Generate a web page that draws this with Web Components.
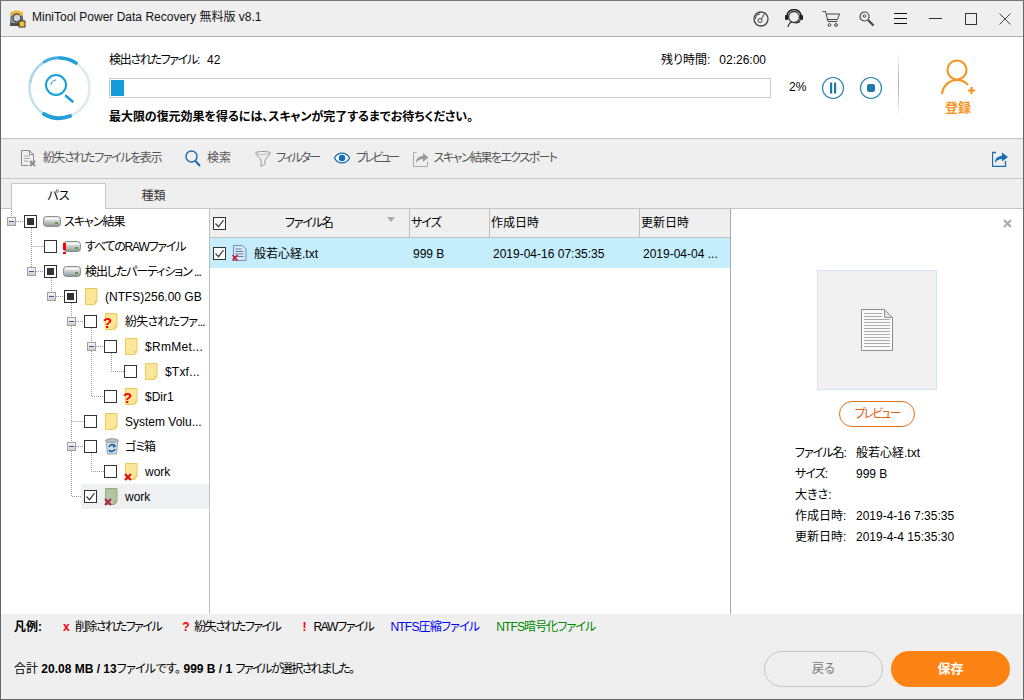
<!DOCTYPE html>
<html lang="ja"><head><meta charset="utf-8"><title>MiniTool Power Data Recovery</title>
<style>
html,body{margin:0;padding:0;background:#fff}
body{font:12px/1.2 "Liberation Sans","Noto Sans CJK JP",sans-serif;color:#000;font-feature-settings:"palt" 1}
</style></head><body>
<app-window>
  <title-bar></title-bar>
  <scan-panel></scan-panel>
  <tool-bar></tool-bar>
  <tab-bar></tab-bar>
  <main-area>
    <file-tree slot="tree"></file-tree>
    <file-table slot="table"></file-table>
    <preview-panel slot="preview"></preview-panel>
  </main-area>
  <status-area></status-area>
</app-window>
<script>
function def(name,html,setup){
  customElements.define(name,class extends HTMLElement{
    connectedCallback(){
      if(this.shadowRoot)return;
      const r=this.attachShadow({mode:'open'});
      r.innerHTML=typeof html==='function'?html(this):html;
      if(setup)setup(this,r);
    }
  });
}
const folder=(fill='#fce69a',line='#eac95a')=>`<svg width="13" height="17" viewBox="0 0 13 17"><path d="M.5.5h11.500v13l-2.500 3H.5z" fill="${fill}" stroke="${line}"/><path d="M10 16v-3h2" fill="none" stroke="${line}"/></svg>`;
const hdd=`<svg width="18" height="11" viewBox="0 0 18 11"><defs><linearGradient id="h" x1="0" y1="0" x2="0" y2="1"><stop offset="0" stop-color="#eee"/><stop offset=".5" stop-color="#c8cccc"/><stop offset="1" stop-color="#8b9090"/></linearGradient></defs><rect x=".5" y=".5" width="17" height="10" rx="3" fill="url(#h)" stroke="#8a8f8f"/><rect x="2" y="2" width="14" height="2" rx="1" fill="#f4f4f4"/><rect x="12" y="6" width="3" height="2" fill="#5aa04a"/></svg>`;
const check=`<svg width="13" height="13" viewBox="0 0 13 13" style="display:block"><path d="M2.500 6.500l3 3.200 5-6.500" fill="none" stroke="#444" stroke-width="1.300"/></svg>`;

def('app-window',`<style>
:host{display:flex;flex-direction:column;box-sizing:border-box;width:1024px;height:700px;border:1px solid #666;border-top-color:#777;overflow:hidden;background:#fff}
</style><slot></slot>`);

def('title-bar',`<style>
:host{display:flex;align-items:center;box-sizing:border-box;height:36px;background:#efefef;border-bottom:1px solid #adadad;flex:none;padding-left:8px;font-size:12px;color:#111}
.t{margin-left:6px;flex:1;white-space:nowrap;position:relative;top:-1px}
svg{display:block}
.i{display:flex;align-items:center;justify-content:center;height:35px}
</style>
<svg width="17" height="19" viewBox="0 0 17 19"><path d="M2 3h11l2 14H1z" fill="#4a4f52"/><path d="M3 4h9l1.500 10H2z" fill="#8c9498"/><circle cx="8" cy="9" r="4" fill="#ccd3d6" stroke="#333"/><path d="M1 6C2 2 8 0 12 3l2-1-.5 5-4-1 1.500-1C8 3 4 4 3 7z" fill="#f3b52c"/><rect x="10" y="12" width="6" height="6" fill="#f3c230" stroke="#333"/></svg>
<span class="t">MiniTool Power Data Recovery 無料版 v8.1</span>
<div class="i" style="width:30px"><svg width="16" height="16" viewBox="0 0 16 16"><circle cx="8" cy="8" r="7" fill="none" stroke="#444" stroke-width="1.300"/><circle cx="7" cy="9.500" r="2" fill="none" stroke="#444"/><path d="M7 3a5 5 0 0 0-4.500 5M12 1.500L8.500 8" fill="none" stroke="#444"/></svg></div>
<div class="i" style="width:36px"><svg width="20" height="20" viewBox="0 0 20 20"><circle cx="10" cy="8" r="5.500" fill="none" stroke="#333" stroke-width="1.300"/><path d="M3 9V7a7 6.500 0 0 1 14 0v2" fill="none" stroke="#222" stroke-width="1.500"/><rect x="1" y="6" width="3" height="5" rx="1" fill="#222"/><rect x="16" y="6" width="3" height="5" rx="1" fill="#222"/><path d="M4 18c.6-3 2-4.500 4-5M16 11c0 2-2 3-5 3" fill="none" stroke="#222" stroke-width="1.200"/></svg></div>
<div class="i" style="width:37px"><svg width="18" height="18" viewBox="0 0 18 18"><path d="M.5 1.500h3l2.500 10h9.500M4.500 4h13l-2 5.500H5.800" fill="none" stroke="#444"/><circle cx="7.500" cy="15" r="1.400" fill="none" stroke="#444"/><circle cx="14" cy="15" r="1.400" fill="none" stroke="#444"/></svg></div>
<div class="i" style="width:35px"><svg width="16" height="16" viewBox="0 0 16 16"><circle cx="5.500" cy="5.500" r="4.500" fill="none" stroke="#444" stroke-width="1.200"/><circle cx="5.500" cy="5" r="1.300" fill="none" stroke="#444"/><path d="M9 9l5.500 5.500" stroke="#444" stroke-width="2.200"/></svg></div>
<div class="i" style="width:33px"><svg width="13" height="11" viewBox="0 0 13 11"><path d="M0 .5h13M0 5.500h13M0 10.500h13" stroke="#111"/></svg></div>
<div class="i" style="width:36px"><svg width="13" height="1"><rect width="13" height="1" fill="#333"/></svg></div>
<div class="i" style="width:35px"><svg width="12" height="12"><rect x=".5" y=".5" width="11" height="11" fill="none" stroke="#333"/></svg></div>
<div class="i" style="width:34px;margin-right:1px"><svg width="12" height="12"><path d="M.5.500l11 11M11.500.500l-11 11" stroke="#444"/></svg></div>`);

def('scan-panel',`<style>
:host{display:flex;box-sizing:border-box;height:102px;flex:none;background:#fff;border-bottom:1px solid #c6c6c6}
.logo{width:108px;flex:none;display:flex;padding:19px 0 0 26px;box-sizing:border-box}
.mid{width:662px;flex:none;display:flex;flex-direction:column;padding-top:15px;box-sizing:border-box}
.top{display:flex;height:26px;padding-top:1px;box-sizing:border-box;justify-content:space-between;padding-right:5px}
.top b{font-weight:400;margin-left:8px}
.bar{box-sizing:border-box;height:20px;border:1px solid #cacaca;padding:1px}
.bar i{display:block;height:100%;width:13px;background:#149cd8}
.msg{font-weight:700;margin-top:12px;white-space:nowrap;letter-spacing:-.05px}
.ctl{display:flex;align-items:center;height:23px;margin-top:39px;flex:none}
.pct{margin-left:18px;width:32px}
svg{display:block}
.div{width:1px;height:66px;margin:15px 0 0 15px;background:linear-gradient(#fff,#aaa 50%,#fff);flex:none}
.reg{flex:1;display:flex;flex-direction:column;align-items:center;padding:21px 6px 0 0;color:#f7941d;font-weight:700;font-size:13px}
.reg span{margin-top:6px;line-height:15px}
</style>
<div class="logo"><svg width="66" height="66" viewBox="0 0 66 66" fill="none">
<circle cx="32.500" cy="32" r="30" stroke="#dde9ee" stroke-width="2.500"/>
<path d="M17 6A30 30 0 0 0 3 27" stroke="#a8d6ea" stroke-width="2.500"/>
<path d="M3 27A30 30 0 0 0 17 58" stroke="#c4e2ee" stroke-width="2.500"/>
<path d="M49 7A30 30 0 0 0 17 6" stroke="#46aede" stroke-width="3" stroke-linecap="round"/>
<path d="M49 7A30 30 0 0 0 33 2" stroke="#22a0da" stroke-width="3.500" stroke-linecap="round"/>
<path d="M17 58A30 30 0 0 0 43 60" stroke="#22a0da" stroke-width="4" stroke-linecap="round"/>
<circle cx="29" cy="29" r="10" stroke="#1a9fd9" stroke-width="2"/><path d="M24 29a5 5 0 0 1 5-5" stroke="#1a9fd9" stroke-width="1"/><path d="M39 40l6.500 5.500" stroke="#1a9fd9" stroke-width="2.600" stroke-linecap="round"/></svg></div>
<div class="mid">
  <div class="top"><span><span style="letter-spacing:-1.3px">検出されたファイル:</span><b>42</b></span><span>残り時間:<b style="margin-left:9px">02:26:00</b></span></div>
  <div class="bar"><i></i></div>
  <div class="msg">最大限の復元効果を得るには、スキャンが完了するまでお待ちください。</div>
</div>
<div class="ctl"><span class="pct">2%</span>
<svg width="24" height="24" viewBox="0 0 24 24"><circle cx="12" cy="12" r="10.500" fill="#fff" stroke="#2786b0" stroke-width="1.200"/><path d="M9 6.500h2.200v11H9zM13 6.500h2.200v11H13z" fill="#1c7ba8"/></svg>
<svg width="24" height="24" viewBox="0 0 24 24" style="margin-left:14px"><circle cx="12" cy="12" r="10.500" fill="#fff" stroke="#2786b0" stroke-width="1.200"/><rect x="8" y="8" width="8" height="8" rx="2" fill="#1c7ba8"/></svg></div>
<div class="div"></div>
<div class="reg"><svg width="34" height="36" viewBox="0 0 34 36"><circle cx="16" cy="12" r="9.500" fill="none" stroke="#f7941d" stroke-width="2"/><path d="M1 36C2 27 9 22 16 22c4 0 8 1.500 11 5" fill="none" stroke="#f7941d" stroke-width="2"/><path d="M27 32.500h7M30.500 29v7" stroke="#f7941d" stroke-width="2.200"/></svg><span>登録</span></div>`);

def('tool-item',t=>`<style>
:host{display:flex;align-items:center;color:#555;white-space:nowrap;margin-left:${t.getAttribute('ml')||0}px}
span{margin-left:${t.getAttribute('gap')||6}px;letter-spacing:${t.getAttribute('ls')||0}px}
::slotted(svg){display:block}
</style><slot></slot><span>${t.getAttribute('label')}</span>`);

def('tool-bar',`<style>
:host{display:flex;align-items:center;box-sizing:border-box;height:40px;flex:none;background:#efefef;border-bottom:1px solid #c6c6c6;padding:0 15px 0 20px}
.sp{flex:1}svg{display:block}
</style>
<tool-item label="紛失されたファイルを表示" ls="-1.4"><svg width="16" height="18" viewBox="0 0 16 18"><path d="M.5.500h8l4 4v8M12.500 4.500h-4v-4M.5.500v15h7" fill="none" stroke="#8a8a8a"/><path d="M3 6h6M3 8.500h6M3 11h4" stroke="#aaa"/><path d="M9 11l5 5M14 11l-5 5" stroke="#8a8a8a" stroke-width="2"/></svg></tool-item>
<tool-item label="検索" ml="24"><svg width="16" height="17" viewBox="0 0 16 17"><circle cx="6.500" cy="6.500" r="5.500" fill="none" stroke="#1b6cb0" stroke-width="1.400"/><path d="M10.500 11l4.500 5" stroke="#1b6cb0" stroke-width="2"/></svg></tool-item>
<tool-item label="フィルター" ml="24" gap="5" ls="-1.9"><svg width="16" height="16" viewBox="0 0 16 16"><path d="M.5 2c0-2 15-2 15 0L10 9v4l-4 2.500V9z" fill="none" stroke="#999"/><path d="M2 2.500c3 1.500 9 1.500 12 0" fill="none" stroke="#bbb"/></svg></tool-item>
<tool-item label="プレビュー" ml="15" ls="-2.6"><svg width="16" height="12" viewBox="0 0 16 12"><path d="M.5 6C4-.5 12-.5 15.500 6 12 12.500 4 12.500.5 6z" fill="#fff" stroke="#1b6cb0" stroke-width="1.300"/><circle cx="8" cy="6" r="3.300" fill="#1b6cb0"/></svg></tool-item>
<tool-item label="スキャン結果をエクスポート" ml="15" gap="5" ls="-1.55"><svg width="16" height="16" viewBox="0 0 16 16"><path d="M3.500 1.500H.5v14h14v-5" fill="none" stroke="#aaa"/><path d="M3 12c0-5 3-7 7-7V2l5.500 4.500L10 11V8c-3 0-5 1-7 4z" fill="#999"/></svg></tool-item>
<div class="sp"></div>
<svg width="16" height="16" viewBox="0 0 16 16"><path d="M4 1.500H.5v14h13V10" fill="none" stroke="#1b6cb0" stroke-width="1.300"/><path d="M3 12c0-5 3-7 7-7V1.500L16 6l-6 4.500V8c-3 0-5 1-7 4z" fill="#1b6cb0"/></svg>`);

def('tab-bar',`<style>
:host{display:flex;box-sizing:border-box;height:30px;flex:none;background:#efefef;border-bottom:1px solid #c6c6c6;padding:4px 0 0 10px;align-items:flex-end}
div{box-sizing:border-box;width:95px;height:26px;display:flex;align-items:center;justify-content:center;margin-bottom:-1px;font-size:12px}
.on{background:#fff;border:1px solid #c6c6c6;border-bottom:0;height:26px}
.off{color:#333}
</style><div class="on">パス</div><div class="off">種類</div>`);

def('main-area',`<style>
:host{display:flex;flex:none;height:405px;background:#fff}
::slotted([slot=tree]){width:209px;box-sizing:border-box;flex:none;border-right:1px solid #c0c0c0}
::slotted([slot=table]){width:521px;box-sizing:border-box;flex:none;border-right:1px solid #aaa}
::slotted([slot=preview]){flex:1}
</style><slot name="tree"></slot><slot name="table"></slot><slot name="preview"></slot>`);

def('tree-row',t=>{
  const l=+t.getAttribute('level')||0, exp=t.hasAttribute('expander');
  const st=t.getAttribute('state')||'';
  const inner=st==='mixed'?'<i></i>':st==='checked'?check:'';
  return `<style>
:host{display:flex;align-items:center;height:25px;box-sizing:border-box;position:relative;white-space:nowrap;padding-left:${6+20*l}px}
.exp{box-sizing:border-box;width:9px;height:9px;flex:none;margin-right:8px;position:relative;background:linear-gradient(#f6f6f6,#cfcfcf);border:1px solid #a0a0a0;${exp?'':'visibility:hidden'}}
.exp:after{content:"";position:absolute;left:1px;right:1px;top:3px;height:1px;background:#3a5a9a}
.cb{box-sizing:border-box;width:13px;height:13px;flex:none;border:1px solid #333;background:#fff;display:flex;align-items:center;justify-content:center}
.cb svg{margin:-1px}
.cb i{display:block;width:7px;height:7px;background:#333}
.ic{width:${t.getAttribute('iw')||21}px;margin-left:${t.getAttribute('il')||7}px;flex:none;position:relative;display:flex;align-items:center;height:25px}
.lb{position:relative;z-index:1;top:1px;letter-spacing:${t.getAttribute('ls')||0}px}
.hl{position:absolute;left:80px;right:0;top:0;bottom:0;background:#eef0f2;${t.hasAttribute('selected')?'':'display:none'}}
.exp,.cb,.ic{z-index:1}
.ic ::slotted(*){display:block}
</style><div class="hl"></div><div class="exp"></div><div class="cb">${inner}</div><div class="ic"><slot></slot></div><span class="lb">${t.getAttribute('label')}</span>`;
});

def('tree-icon',t=>{
  const k=t.getAttribute('kind');
  return `<style>
:host{display:block;position:relative;width:18px;height:19px}
svg{display:block;position:absolute}
.q{position:absolute;left:-2px;top:3px;color:#f00;font-weight:700;font-size:15px;line-height:15px;font-family:"Liberation Sans",sans-serif}
.x{position:absolute}
</style>`+({
   hdd:`<div style="position:absolute;top:4px;left:0">${hdd}</div>`,
   raw:`<div style="position:absolute;top:4px;left:0">${hdd}</div><div style="position:absolute;left:0;top:6px;width:3px;height:7px;background:#f00"></div><div style="position:absolute;left:0;top:15px;width:3px;height:2px;background:#f00"></div>`,
   folder:`<div style="position:absolute;top:1px;left:0">${folder()}</div>`,
   lost:`<div style="position:absolute;top:1px;left:0">${folder()}</div><span class="q">?</span>`,
   del:`<div style="position:absolute;top:1px;left:0">${folder()}</div><svg class="x" width="8" height="8" viewBox="0 0 8 8" style="left:-1px;top:11px"><path d="M1 1l6 6M7 1L1 7" stroke="#e01020" stroke-width="2.200"/></svg>`,
   delg:`<div style="position:absolute;top:1px;left:0">${folder('#b3c4a0','#98a878')}</div><svg class="x" width="8" height="8" viewBox="0 0 8 8" style="left:-1px;top:11px"><path d="M1 1l6 6M7 1L1 7" stroke="#b02a50" stroke-width="2.200"/></svg>`,
   bin:`<svg width="14" height="17" viewBox="0 0 14 17" style="top:1px;left:0"><path d="M1 2l1.500 14h9L13 2z" fill="#d6dce2" stroke="#9aa3ad"/><ellipse cx="7" cy="2.500" rx="6" ry="1.800" fill="#b9c2cb" stroke="#8c96a0"/><path d="M4 9c1-3 5-3 6-1l-2 1M10 11c-1 3-5 3-6 1" fill="none" stroke="#1b5fb5" stroke-width="1.700"/></svg>`
  })[k];
});

def('file-tree',`<style>
:host{display:block;position:relative;box-sizing:border-box;overflow:hidden}
svg.lines{position:absolute;left:0;top:0;pointer-events:none;z-index:0}
.rows{position:relative}
</style>
<svg class="lines" width="209" height="405" viewBox="0 0 209 405"><path fill="none" stroke="#999" stroke-dasharray="1 1" d="
M10.500 0V8M15 12.500H23
M30.500 17V60M30.500 37.500H43M35 62.500H43
M50.500 67V83M55 87.500H63
M70.500 92V108M70.500 117V233M75 112.500H83M70.500 212.500H83M75 237.500H83M70.500 242V287.500H83
M90.500 117V133M90.500 142V187.500H103M95 137.500H103
M110.500 142V162.500H123
M90.500 242V262.500H103
"/></svg>
<div class="rows">
<tree-row level="0" state="mixed" expander ls="-1" label="スキャン結果" il="6" iw="21"><tree-icon kind="hdd"></tree-icon></tree-row>
<tree-row level="1" state="" ls="-1.2" label="すべてのRAWファイル" il="6" iw="22"><tree-icon kind="raw"></tree-icon></tree-row>
<tree-row level="1" state="mixed" expander ls="-1.1" label="検出したパーティション ..." il="6" iw="22"><tree-icon kind="hdd"></tree-icon></tree-row>
<tree-row level="2" state="mixed" expander label="(NTFS)256.00 GB" il="8" iw="20"><tree-icon kind="folder"></tree-icon></tree-row>
<tree-row level="3" state="" expander ls="-.8" label="紛失されたファ..." il="8" iw="20"><tree-icon kind="lost"></tree-icon></tree-row>
<tree-row level="4" state="" expander ls=".3" label="$RmMet..." il="8" iw="20"><tree-icon kind="folder"></tree-icon></tree-row>
<tree-row level="5" state="" ls=".2" label="$Txf..." il="8" iw="20"><tree-icon kind="folder"></tree-icon></tree-row>
<tree-row level="4" state="" label="$Dir1" il="8" iw="20"><tree-icon kind="lost"></tree-icon></tree-row>
<tree-row level="3" state="" label="System Volu..." il="8" iw="20"><tree-icon kind="folder"></tree-icon></tree-row>
<tree-row level="3" state="" expander ls="-1" label="ゴミ箱" il="8" iw="20"><tree-icon kind="bin"></tree-icon></tree-row>
<tree-row level="4" state="" label="work" il="8" iw="20"><tree-icon kind="del"></tree-icon></tree-row>
<tree-row level="3" state="checked" selected label="work" il="8" iw="20"><tree-icon kind="delg"></tree-icon></tree-row>
</div>`);

def('file-table',`<style>
:host{display:block;box-sizing:border-box}
.g{display:grid;grid-template-columns:200px 80px 150px 90px}
.h{height:29px;background:#efefef;border-bottom:1px solid #c0c0c0;box-sizing:border-box}
.h>div{box-sizing:border-box;border-right:1px solid #c0c0c0;display:flex;align-items:center;padding-left:1px;position:relative;white-space:nowrap}
.r{height:30px;background:#c4eefc;white-space:nowrap}
.r>div{display:flex;align-items:center;overflow:hidden;padding-left:3px}
.r span.t{position:relative;top:1px}
.cb{box-sizing:border-box;width:13px;height:13px;border:1px solid #333;background:#fff;flex:none;display:flex;align-items:center;justify-content:center}
.cb svg{margin:-1px}
.tri{position:absolute;left:177px;top:8px;width:0;height:0;border:4.500px solid transparent;border-top:5px solid #aaa;border-bottom:0}
svg{display:block}
</style>
<div class="g h">
 <div style="padding-left:3px"><span class="cb">${check}</span><span style="margin-left:59px;letter-spacing:-1.2px">ファイル名</span><i class="tri"></i></div>
 <div><span style="letter-spacing:-1px">サイズ</span></div><div>作成日時</div><div style="border-right:0">更新日時</div>
</div>
<div class="g r">
 <div><span class="cb">${check}</span>
 <svg style="margin-left:6px" width="15" height="17" viewBox="0 0 15 17"><path d="M1.500.500h9l3.500 3.500v11.500h-12.500z" fill="#dbe6f4" stroke="#6d8fb8"/><path d="M3.500 4h6M3.500 6.500h8M3.500 9h8M3.500 11.500h8" stroke="#5d83b5"/><path d="M.5 10l5 5.500M5.500 10l-5 5.500" stroke="#c41f3a" stroke-width="1.800"/></svg>
 <span class="t" style="margin-left:7px">般若心経.txt</span></div>
 <div><span class="t">999 B</span></div><div><span class="t">2019-04-16 07:35:35</span></div><div><span class="t">2019-04-04 ...</span></div>
</div>`);

def('preview-panel',`<style>
:host{display:flex;flex-direction:column;align-items:stretch;position:relative;box-sizing:border-box;background:#fff;white-space:nowrap}
.x{position:absolute;left:272px;top:10px}
.box{box-sizing:border-box;width:120px;height:120px;margin:61px 0 0 86px;background:#f1f1f1;border:1px solid #d4e4f6;display:flex;align-items:center;justify-content:center}
.btn{box-sizing:border-box;width:76px;height:26px;margin:11px 0 0 108px;border:1.500px solid #e2711d;border-radius:13px;display:flex;align-items:center;justify-content:center;color:#e0600e;background:#fff;letter-spacing:-2px}
.info{display:grid;grid-template-columns:61px auto;margin:16px 0 0 64px;grid-auto-rows:21px;align-items:center;justify-content:start}
.k{letter-spacing:-1px}
svg{display:block}
</style>
<svg class="x" width="9" height="9" viewBox="0 0 9 9"><path d="M1 1l7 7M8 1L1 8" stroke="#aaa" stroke-width="2"/></svg>
<div class="box"><svg width="32" height="42" viewBox="0 0 32 42"><path d="M.5.500h23l8 8v33H.5z" fill="#fafafa" stroke="#8e8e8e"/><path d="M23.500.5v8h8z" fill="#ddd" stroke="#999"/><path d="M3 4.500h18M3 7.500h18M3 10.500h26M3 13.500h26M3 16.500h26M3 19.500h26M3 22.500h26M3 25.500h26M3 28.500h26M3 31.500h26M3 34.500h26M3 37.500h26" stroke="#aaa"/></svg></div>
<div class="btn">プレビュー</div>
<div class="info">
<span class="k">ファイル名:</span><span>般若心経.txt</span>
<span class="k">サイズ:</span><span>999 B</span>
<span>大きさ:</span><span></span>
<span>作成日時:</span><span>2019-4-16 7:35:35</span>
<span>更新日時:</span><span>2019-4-4 15:35:30</span>
</div>`);

def('status-area',`<style>
:host{display:block;flex:1;background:#efefef;position:relative;box-sizing:border-box;padding:0 13px}
.leg{display:flex;align-items:center;height:27px;white-space:nowrap}
.leg b{margin-right:21px}
.m{color:#f00;font-weight:700;margin-right:6px;width:6px;text-align:center;display:inline-block;font-style:normal}
.leg span{margin-right:21px}
.leg span s{text-decoration:none;letter-spacing:-1.5px}
.row{display:flex;align-items:center;justify-content:space-between;height:36px;margin-top:10px}
.btns{display:flex;gap:8px}
.btn{box-sizing:border-box;width:119px;height:36px;border-radius:18px;display:flex;align-items:center;justify-content:center}
.back{border:1px solid #c4c4c4;color:#777}
.save{background:#fd8414;color:#fff;font-weight:700;font-size:13px}
</style>
<div class="leg"><b>凡例:</b>
<span><i class="m">x</i><s>削除されたファイル</s></span>
<span><i class="m">?</i><s>紛失されたファイル</s></span>
<span style="margin-right:17px"><i class="m">!</i><s style="letter-spacing:-1.3px">RAWファイル</s></span>
<span style="color:#00f;margin-right:17px;letter-spacing:-.8px">NTFS圧縮ファイル</span>
<span style="color:#080;letter-spacing:-.9px">NTFS暗号化ファイル</span></div>
<div class="row"><div>合計 <b>20.08 MB / 13</b><span style="letter-spacing:-.7px">ファイルです。</span> <b>999 B / 1</b> <span style="letter-spacing:-1.6px">ファイルが選択されました。</span></div>
<div class="btns"><div class="btn back">戻る</div><div class="btn save">保存</div></div></div>`);
</script>
</body></html>
